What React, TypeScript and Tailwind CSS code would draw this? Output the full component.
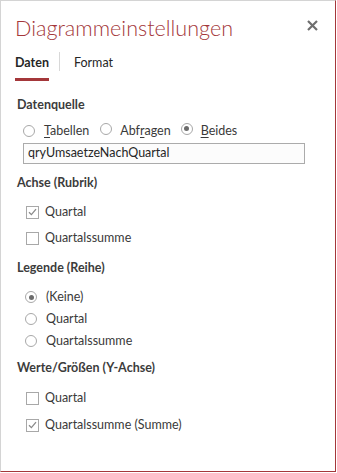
import React from "react";

const F = { fontFamily: 'Lato, "Open Sans", sans-serif' };

function Radio({ checked }: { checked?: boolean }) {
  return (
    <span className="relative inline-block w-[12px] h-[12px] rounded-full border border-[#a8a8a8] bg-white shrink-0">
      {checked && (
        <span className="absolute left-[2.5px] top-[2.5px] w-[5px] h-[5px] rounded-full bg-[#6b6b6b]" />
      )}
    </span>
  );
}

function Check({ checked }: { checked?: boolean }) {
  return (
    <span className="relative inline-flex items-center justify-center w-[13px] h-[13px] border border-[#a8a8a8] bg-white shrink-0">
      {checked && (
        <svg width="9" height="8" viewBox="0 0 9 8">
          <path d="M1 4.2 L3.4 6.6 L8 1.2" fill="none" stroke="#8a8a8a" strokeWidth="1.3" />
        </svg>
      )}
    </span>
  );
}

function Heading({ children }: { children: React.ReactNode }) {
  return (
    <div className="flex items-center pl-[16px] h-[22px] text-[12.5px] font-bold text-[#3c3c3c]">
      {children}
    </div>
  );
}

function CheckRow({ checked, label }: { checked?: boolean; label: string }) {
  return (
    <div className="flex items-center h-[26px] pl-[25px] text-[12.5px] text-[#3a3a3a]">
      <Check checked={checked} />
      <span className="ml-[6px]">{label}</span>
    </div>
  );
}

export default function App() {
  return (
    <div style={F} className="w-[336px] h-[472px] bg-white border-l border-t border-l-[#d4d4d4] border-t-[#d4d4d4] border-r border-b border-r-[#a4373a] border-b-[#a4373a] flex flex-col">
      {/* title */}
      <div className="flex items-center justify-between pl-[14px] pr-[17px] pt-[11px] h-[43px]">
        <div className="text-[21.6px] font-light text-[#a4373a] leading-[30px]">
          Diagrammeinstellungen
        </div>
        <svg width="11" height="11" viewBox="0 0 11 11" className="mt-[-6px]">
          <path d="M1 1 L10 10 M10 1 L1 10" stroke="#6e6e6e" strokeWidth="2.2" />
        </svg>
      </div>
      {/* tabs */}
      <div className="flex items-start pl-[14px] pt-[8px] h-[35px]">
        <div className="flex flex-col">
          <span className="text-[12.5px] font-bold text-[#262626] leading-[18px] pt-[2px]">Daten</span>
          <span className="mt-[6px] h-[3px] w-full bg-[#a4373a]" />
        </div>
        <span className="ml-[10px] w-px h-[19px] bg-[#d8d8d8]" />
        <span className="ml-[14px] text-[12.5px] text-[#262626] leading-[18px] pt-[2px]">Format</span>
      </div>
      <div className="h-[15px]" />
      <Heading>Datenquelle</Heading>
      <div className="h-[5px]" />
      <div className="flex items-center h-[20px] pl-[22px] text-[12.5px] text-[#3a3a3a]">
        <Radio />
        <span className="ml-[9px]"><span className="underline underline-offset-2">T</span>abellen</span>
        <span className="ml-[11px]"><Radio /></span>
        <span className="ml-[8px]">Abf<span className="underline underline-offset-2">r</span>agen</span>
        <span className="ml-[10px]"><Radio checked /></span>
        <span className="ml-[8px]"><span className="underline underline-offset-2">B</span>eides</span>
      </div>
      <div className="pl-[22px] pt-[2px]">
        <div className="w-[282px] h-[21px] border border-[#ababab] bg-[#fcfcfc] flex items-center pl-[4px] text-[12.5px] text-[#262626]">
          qryUmsaetzeNachQuartal
        </div>
      </div>
      <div className="h-[8px]" />
      <Heading>Achse (Rubrik)</Heading>
      <div className="h-[5px]" />
      <CheckRow checked label="Quartal" />
      <CheckRow label="Quartalssumme" />
      <div className="h-[6px]" />
      <Heading>Legende (Reihe)</Heading>
      <div className="h-[7px]" />
      {["(Keine)", "Quartal", "Quartalssumme"].map((t, i) => (
        <div key={t} className="flex items-center h-[22px] pl-[24px] text-[12.5px] text-[#3a3a3a]">
          <Radio checked={i === 0} />
          <span className="ml-[9px]">{t}</span>
        </div>
      ))}
      <div className="h-[5px]" />
      <Heading>Werte/Größen (Y-Achse)</Heading>
      <div className="h-[6px]" />
      <CheckRow label="Quartal" />
      <div className="h-[1px]" />
      <CheckRow checked label="Quartalssumme (Summe)" />
    </div>
  );
}
